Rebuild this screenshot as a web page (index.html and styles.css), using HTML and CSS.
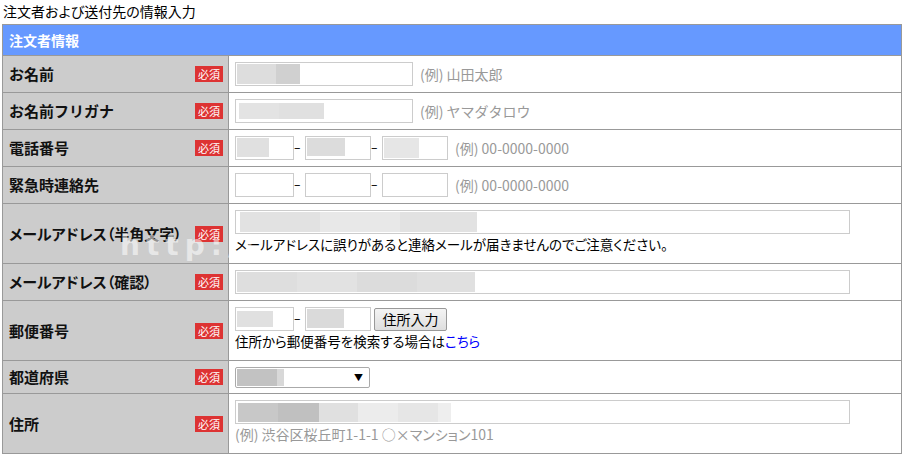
FILE: index.html
```html
<!DOCTYPE html>
<html lang="ja">
<head>
<meta charset="utf-8">
<title>注文者および送付先の情報入力</title>
<link rel="stylesheet" href="styles.css">
</head>
<body>
<div class="page">
  <h1 class="title">注文者および送付先の情報入力</h1>
  <table class="form">
    <colgroup><col class="col-label"><col class="col-field"></colgroup>
    <thead>
      <tr><th colspan="2" class="head">注文者情報</th></tr>
    </thead>
    <tbody>
      <tr>
        <th><div class="label"><span>お名前</span><span class="req">必須</span></div></th>
        <td><div class="line"><input class="in w-name b-name1" type="text"><span class="hint">(例) 山田太郎</span></div></td>
      </tr>
      <tr>
        <th><div class="label"><span>お名前フリガナ</span><span class="req">必須</span></div></th>
        <td><div class="line"><input class="in w-name b-name2" type="text"><span class="hint">(例) ヤマダタロウ</span></div></td>
      </tr>
      <tr>
        <th><div class="label"><span>電話番号</span><span class="req">必須</span></div></th>
        <td><div class="line"><input class="in w-t1 b-t1" type="text"><span class="dash">–</span><input class="in w-t2 b-t2" type="text"><span class="dash">–</span><input class="in w-t2 b-t3" type="text"><span class="hint">(例) 00-0000-0000</span></div></td>
      </tr>
      <tr>
        <th><div class="label"><span>緊急時連絡先</span></div></th>
        <td><div class="line"><input class="in w-t1" type="text"><span class="dash">–</span><input class="in w-t2" type="text"><span class="dash">–</span><input class="in w-t2" type="text"><span class="hint">(例) 00-0000-0000</span></div></td>
      </tr>
      <tr class="tall">
        <th><div class="label"><span class="narrow">メールアドレス（半角文字）</span><span class="req">必須</span></div></th>
        <td><div class="line"><input class="in w-long b-mail1" type="text"></div><p class="note">メールアドレスに誤りがあると連絡メールが届きませんのでご注意ください。</p></td>
      </tr>
      <tr>
        <th><div class="label"><span class="narrow">メールアドレス（確認）</span><span class="req">必須</span></div></th>
        <td><div class="line"><input class="in w-long b-mail2" type="text"></div></td>
      </tr>
      <tr class="tall">
        <th><div class="label"><span>郵便番号</span><span class="req">必須</span></div></th>
        <td><div class="line"><input class="in w-t1 b-z1" type="text"><span class="dash">–</span><input class="in w-t2 b-z2" type="text"><button class="btn" type="button">住所入力</button></div><p class="note">住所から郵便番号を検索する場合は<a href="#" class="link">こちら</a></p></td>
      </tr>
      <tr class="short">
        <th><div class="label"><span>都道府県</span><span class="req">必須</span></div></th>
        <td><div class="line"><div class="select"><span class="sel-val"></span><span class="arrow">▼</span></div></div></td>
      </tr>
      <tr class="tall">
        <th><div class="label"><span>住所</span><span class="req">必須</span></div></th>
        <td><div class="line"><input class="in w-long b-addr" type="text"></div><p class="note gray">(例) 渋谷区桜丘町1-1-1 ○×マンション101</p></td>
      </tr>
    </tbody>
  </table>
  <div class="watermark">http://</div>
</div>
</body>
</html>
```
FILE: styles.css
```css
html, body { margin: 0; padding: 0; background: #fff; }
body {
  font-family: "Noto Sans CJK JP", "Noto Sans", sans-serif;
  color: #000;
  font-size: 14px;
}
.page { position: relative; padding: 2px 2px 0 2px; width: 900px; }
.title {
  margin: 0 0 1px 1px;
  font-size: 14px;
  font-weight: normal;
  line-height: 19px;
  height: 21px;
  font-feature-settings: "palt";
}
.form {
  border-collapse: collapse;
  table-layout: fixed;
  width: 900px;
  border: 1px solid #999;
}
.col-label { width: 226px; }
.form th, .form td { border: 1px solid #999; padding: 0; }
.form th.head {
  background: #6699ff;
  color: #fff;
  text-align: left;
  font-size: 14px;
  font-weight: bold;
  height: 30px;
  padding: 0 6px;
  line-height: 20px;
}
.form tbody th {
  background: #cccccc;
  text-align: left;
  padding: 0 5px 0 6px;
  vertical-align: middle;
}
.label {
  display: flex;
  justify-content: space-between;
  align-items: center;
  font-size: 15px;
  font-weight: bold;
  color: #111;
  line-height: 20px;
  white-space: nowrap;
}
.narrow { font-feature-settings: "palt"; }
.req {
  background: #dd3333;
  color: #fff;
  font-size: 11px;
  font-weight: normal;
  line-height: 16px;
  width: 28px;
  height: 16px;
  text-align: center;
  letter-spacing: 0;
  flex: none;
}
.form td {
  padding: 6px 6px 6px 6px;
  vertical-align: top;
}
.tall td { padding-bottom: 9px; }
.line { display: flex; align-items: center; height: 24px; }
.short .line { height: 20px; }
.in {
  box-sizing: border-box;
  height: 24px;
  margin: 0;
  border: 1px solid #cccccc;
  padding: 0 3px;
  background-color: #fff;
  background-repeat: no-repeat;
  box-shadow: inset 0 0 0 1px #fff;
  font: inherit;
  outline: none;
}
.w-name { width: 178px; }
.w-t1 { width: 59px; }
.w-t2 { width: 66px; }
.w-long { width: 615px; }
.dash {
  width: 11px;
  font-family: "DejaVu Sans", sans-serif;
  font-size: 13px;
  line-height: 20px;
  text-align: left;
}
.hint { color: #999; margin-left: 7px; line-height: 20px; white-space: nowrap; }
.note { margin: 0; line-height: 20px; font-size: 13.5px; font-feature-settings: "palt"; white-space: nowrap; }
.note.gray { color: #999; font-size: 14px; }
.link { color: #0000ff; text-decoration: none; }
.btn {
  box-sizing: border-box;
  margin-left: 3px;
  width: 73px;
  height: 23px;
  border: 1px solid #999;
  border-radius: 2px;
  background: linear-gradient(#f4f4f4, #dedede);
  font: inherit;
  font-size: 14px;
  line-height: 20px;
  padding: 0;
  color: #000;
}
.select {
  box-sizing: border-box;
  width: 135px;
  height: 21px;
  border: 1px solid #aaa;
  border-radius: 2px;
  display: flex;
  align-items: stretch;
  justify-content: space-between;
  padding: 1px 6px 1px 1px;
  background: #fff;
}
.sel-val { width: 47px; background: linear-gradient(90deg, #c2c2c2 0 40px, #d8d8d8 40px); }
.arrow { font-size: 9px; line-height: 17px; }

/* blurred values */
.b-name1 { background-image: linear-gradient(90deg, #dddddd 0 39px, #d0d0d0 39px 63px, transparent 63px); background-position: 1px 1px; background-size: 63px 20px; }
.b-name2 { background-image: linear-gradient(90deg, #e3e3e3 0 40px, #e0e0e0 40px 85px, transparent 85px); background-position: 3px 3px; background-size: 85px 16px; }
.b-t1 { background-image: linear-gradient(#e0e0e0, #e0e0e0); background-position: 1px 1px; background-size: 32px 19px; }
.b-t2 { background-image: linear-gradient(#dcdcdc, #dcdcdc); background-position: 1px 1px; background-size: 38px 18px; }
.b-t3 { background-image: linear-gradient(#e6e6e6, #e6e6e6); background-position: 1px 1px; background-size: 35px 20px; }
.b-mail1 { background-image: linear-gradient(90deg, #e2e2e2 0 80px, #e8e8e8 80px 160px, #e2e2e2 160px 237px, transparent 237px); background-position: 4px 1px; background-size: 237px 21px; }
.b-mail2 { background-image: linear-gradient(90deg, #dedede 0 60px, #e2e2e2 60px 120px, #dcdcdc 120px 180px, #e0e0e0 180px 238px, transparent 238px); background-position: 1px 1px; background-size: 238px 21px; }
.b-z1 { background-image: linear-gradient(#e0e0e0, #e0e0e0); background-position: 1px 3px; background-size: 36px 16px; }
.b-z2 { background-image: linear-gradient(#dadada, #dadada); background-position: 1px 1px; background-size: 37px 19px; }
.b-addr { background-image: linear-gradient(90deg, #c8c8c8 0 40px, #c0c0c0 40px 81px, #e0e0e0 81px 120px, #ececec 120px 160px, #e6e6e6 160px 200px, #eeeeee 200px 213px, transparent 213px); background-position: 2px 2px; background-size: 213px 19px; }

.watermark {
  position: absolute;
  left: 120px;
  top: 226px;
  font-family: "DejaVu Sans", sans-serif;
  font-weight: bold;
  font-size: 28px;
  letter-spacing: 6px;
  line-height: 40px;
  color: rgba(255, 255, 255, 0.55);
  pointer-events: none;
}
```
